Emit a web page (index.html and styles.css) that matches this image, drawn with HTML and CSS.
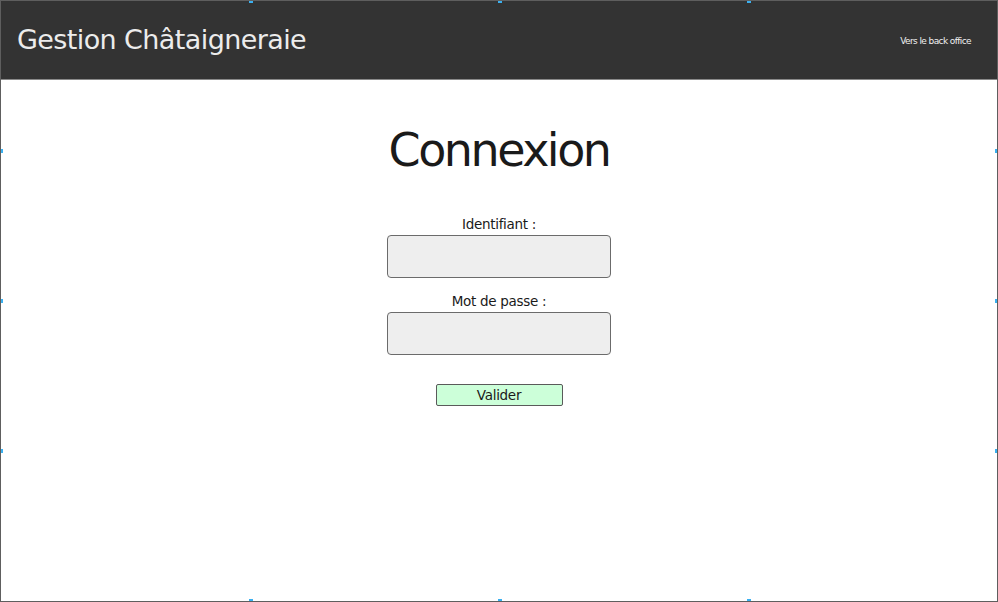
FILE: index.html
```html
<!DOCTYPE html>
<html lang="fr">
<head>
<meta charset="utf-8">
<title>Connexion</title>
<link rel="stylesheet" href="styles.css">
</head>
<body>
<div class="frame">
  <header class="topbar">
    <h1 class="brand">Gestion Châtaigneraie</h1>
    <a class="backlink" href="#">Vers le back office</a>
  </header>
  <main class="content">
    <h2 class="title">Connexion</h2>
    <form class="login">
      <label class="field">
        <span class="label">Identifiant :</span>
        <input class="input" type="text">
      </label>
      <label class="field">
        <span class="label">Mot de passe :</span>
        <input class="input" type="password">
      </label>
      <button class="submit" type="button">Valider</button>
    </form>
  </main>
  <span class="handle h-t1"></span>
  <span class="handle h-t2"></span>
  <span class="handle h-t3"></span>
  <span class="handle h-l1"></span>
  <span class="handle h-l2"></span>
  <span class="handle h-l3"></span>
  <span class="handle h-r1"></span>
  <span class="handle h-r2"></span>
  <span class="handle h-r3"></span>
  <span class="handle h-b1"></span>
  <span class="handle h-b2"></span>
  <span class="handle h-b3"></span>
</div>
</body>
</html>
```

FILE: styles.css
```css
* { box-sizing: border-box; }
html, body { margin: 0; padding: 0; background: #fff; }
body { font-family: "DejaVu Sans", Verdana, sans-serif; color: #1a1a1a; }

.frame {
  position: relative;
  width: 998px;
  height: 602px;
  border: 1px solid #5e5e5e;
  display: flex;
  flex-direction: column;
  overflow: hidden;
}

.topbar {
  height: 79px;
  flex: 0 0 79px;
  background: #333333;
  border-bottom: 1px solid #8a8a8a;
  display: flex;
  align-items: center;
  justify-content: space-between;
  padding: 0 26px 0 16px;
}

.brand {
  margin: 0;
  font-weight: normal;
  font-size: 27px;
  letter-spacing: -0.6px;
  color: #ececec;
  padding-bottom: 2px;
}

.backlink {
  color: #f0f0f0;
  text-decoration: none;
  font-size: 9px;
  letter-spacing: -0.6px;
  padding-top: 1px;
}

.content {
  flex: 1;
  display: flex;
  flex-direction: column;
  align-items: center;
}

.title {
  margin: 41px 0 0;
  font-weight: normal;
  font-size: 46px;
  letter-spacing: -2.5px;
  line-height: 58px;
  color: #1a1a1a;
}

.login {
  margin-top: 37px;
  display: flex;
  flex-direction: column;
  align-items: center;
}

.field {
  display: flex;
  flex-direction: column;
  align-items: center;
  margin-bottom: 15px;
}

.label {
  font-size: 13.5px;
  letter-spacing: -0.3px;
  line-height: 17px;
  margin-bottom: 2px;
}

.input {
  width: 224px;
  height: 43px;
  border: 1px solid #6b6b6b;
  border-radius: 4px;
  background: #eeeeee;
  margin: 0;
}

.submit {
  margin-top: 14px;
  width: 127px;
  height: 22px;
  border: 1px solid #5a5a5a;
  border-radius: 2px;
  background: #ccffd9;
  font-family: "DejaVu Sans", Verdana, sans-serif;
  font-size: 13.5px;
  letter-spacing: -0.3px;
  color: #1a1a1a;
  padding: 0;
}

.handle {
  position: absolute;
  width: 4px;
  height: 4px;
  background: #3ab0f0;
}
.h-t1 { top: -2px; left: 248px; }
.h-t2 { top: -2px; left: 497px; }
.h-t3 { top: -2px; left: 746px; }
.h-b1 { bottom: -2px; left: 248px; }
.h-b2 { bottom: -2px; left: 497px; }
.h-b3 { bottom: -2px; left: 746px; }
.h-l1 { left: -2px; top: 148px; }
.h-l2 { left: -2px; top: 298px; }
.h-l3 { left: -2px; top: 448px; }
.h-r1 { right: -2px; top: 148px; }
.h-r2 { right: -2px; top: 298px; }
.h-r3 { right: -2px; top: 448px; }
```
